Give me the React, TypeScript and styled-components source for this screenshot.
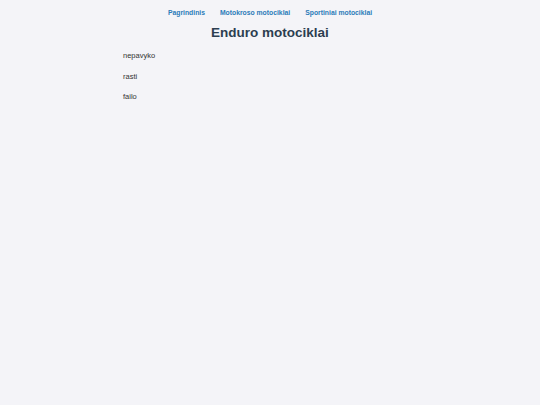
import * as React from "react";
import styled, { createGlobalStyle } from "styled-components";

const GlobalStyle = createGlobalStyle`
  html, body {
    margin: 0;
    padding: 0;
    background: #f4f4f8;
    font-family: "Liberation Sans", Arial, sans-serif;
  }
`;

export default function App() {
  return (
    <>
      <GlobalStyle />
      <Page>
        <Nav>
          <NavLink href="#">Pagrindinis</NavLink>
          <NavLink href="#">Motokroso motociklai</NavLink>
          <NavLink href="#">Sportiniai motociklai</NavLink>
        </Nav>
        <Title>Enduro motociklai</Title>
        <Content>
          <Line>nepavyko</Line>
          <Line>rasti</Line>
          <Line>failo</Line>
        </Content>
      </Page>
    </>
  );
}

const Page = styled.div`
  min-height: 405px;
  background: #f4f4f8;
`;

const Nav = styled.nav`
  display: flex;
  justify-content: center;
  gap: 15px;
  padding-top: 9px;
  height: 8px;
  line-height: 8px;
`;

const NavLink = styled.a`
  color: #2b7bb9;
  font-size: 6.8px;
  font-weight: bold;
  text-decoration: none;
`;

const Title = styled.h1`
  margin: 8px 0 0;
  text-align: center;
  font-size: 13.5px;
  line-height: 16px;
  color: #2c3e50;
`;

const Content = styled.div`
  width: 294px;
  margin: 0 auto;
  padding-top: 11px;
  display: flex;
  flex-direction: column;
  gap: 12px;
`;

const Line = styled.p`
  margin: 0;
  font-size: 7.5px;
  line-height: 8.5px;
  color: #333;
`;
